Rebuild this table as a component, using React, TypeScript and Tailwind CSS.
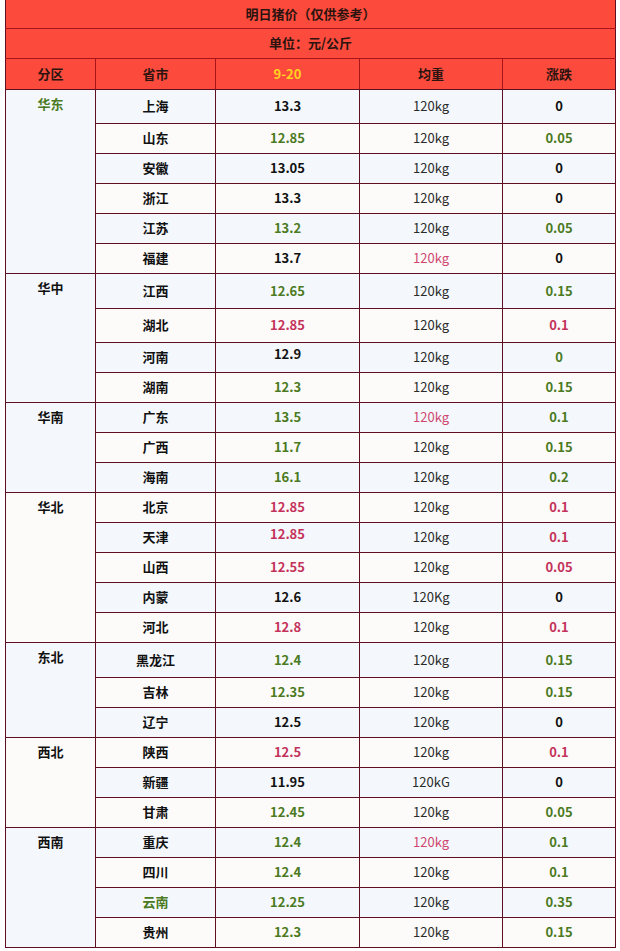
import React from "react";

type Tone = "k" | "g" | "r";

type Row = {
  name: string;
  price: string;
  pt: Tone;
  weight?: string;
  wt?: Tone;
  diff: string;
  dt: Tone;
  h?: number;
  nt?: Tone;
  up?: boolean;
};

type Group = { region: string; rt?: Tone; rows: Row[] };

const GROUPS: Group[] = [
  {
    region: "华东",
    rt: "g",
    rows: [
      { name: "上海", price: "13.3", pt: "k", diff: "0", dt: "k", h: 34 },
      { name: "山东", price: "12.85", pt: "g", diff: "0.05", dt: "g" },
      { name: "安徽", price: "13.05", pt: "k", diff: "0", dt: "k" },
      { name: "浙江", price: "13.3", pt: "k", diff: "0", dt: "k" },
      { name: "江苏", price: "13.2", pt: "g", diff: "0.05", dt: "g" },
      { name: "福建", price: "13.7", pt: "k", wt: "r", diff: "0", dt: "k" },
    ],
  },
  {
    region: "华中",
    rows: [
      { name: "江西", price: "12.65", pt: "g", diff: "0.15", dt: "g", h: 35 },
      { name: "湖北", price: "12.85", pt: "r", diff: "0.1", dt: "r", h: 34 },
      { name: "河南", price: "12.9", pt: "k", diff: "0", dt: "g", up: true },
      { name: "湖南", price: "12.3", pt: "g", diff: "0.15", dt: "g" },
    ],
  },
  {
    region: "华南",
    rows: [
      { name: "广东", price: "13.5", pt: "g", wt: "r", diff: "0.1", dt: "g" },
      { name: "广西", price: "11.7", pt: "g", diff: "0.15", dt: "g" },
      { name: "海南", price: "16.1", pt: "g", diff: "0.2", dt: "g" },
    ],
  },
  {
    region: "华北",
    rows: [
      { name: "北京", price: "12.85", pt: "r", diff: "0.1", dt: "r" },
      { name: "天津", price: "12.85", pt: "r", diff: "0.1", dt: "r", up: true },
      { name: "山西", price: "12.55", pt: "r", diff: "0.05", dt: "r" },
      { name: "内蒙", price: "12.6", pt: "k", weight: "120Kg", diff: "0", dt: "k" },
      { name: "河北", price: "12.8", pt: "r", diff: "0.1", dt: "r" },
    ],
  },
  {
    region: "东北",
    rows: [
      { name: "黑龙江", price: "12.4", pt: "g", diff: "0.15", dt: "g", h: 35 },
      { name: "吉林", price: "12.35", pt: "g", diff: "0.15", dt: "g" },
      { name: "辽宁", price: "12.5", pt: "k", diff: "0", dt: "k" },
    ],
  },
  {
    region: "西北",
    rows: [
      { name: "陕西", price: "12.5", pt: "r", diff: "0.1", dt: "r" },
      { name: "新疆", price: "11.95", pt: "k", weight: "120kG", diff: "0", dt: "k" },
      { name: "甘肃", price: "12.45", pt: "g", diff: "0.05", dt: "g" },
    ],
  },
  {
    region: "西南",
    rows: [
      { name: "重庆", price: "12.4", pt: "g", wt: "r", diff: "0.1", dt: "g" },
      { name: "四川", price: "12.4", pt: "g", diff: "0.1", dt: "g" },
      { name: "云南", price: "12.25", pt: "g", diff: "0.35", dt: "g", nt: "g" },
      { name: "贵州", price: "12.3", pt: "g", diff: "0.15", dt: "g" },
    ],
  },
];

const boldTone: Record<Tone, string> = {
  k: "text-[#111111]",
  g: "text-[#4b7a22]",
  r: "text-[#c4325a]",
};

const weightTone: Record<Tone, string> = {
  k: "text-[#2a2a2a]",
  g: "text-[#4b7a22]",
  r: "text-[#cf4670]",
};

const cell = "border border-[#5e1022] text-center align-middle p-0";

export default function App() {
  let idx = 0;
  return (
    <div
      className="w-[620px] h-[951px] bg-white pl-[5px]"
      style={{ fontFamily: '"Noto Sans CJK SC", "Noto Sans", sans-serif' }}
    >
      <table className="border-collapse table-fixed w-[610px] text-[13px] leading-[18px]">
        <colgroup>
          <col className="w-[90px]" />
          <col className="w-[120px]" />
          <col className="w-[144px]" />
          <col className="w-[143px]" />
          <col className="w-[113px]" />
        </colgroup>
        <thead>
          {/* 标题 */}
          <tr className="h-[28px] bg-[#fc4b3c]">
            <th
              colSpan={5}
              className="border-x border-b border-[#a8141a] border-l-[#5e1022] border-r-[#5e1022] font-bold text-[#2b1410]"
            >
              明日猪价（仅供参考）
            </th>
          </tr>
          <tr className="h-[30px] bg-[#fc4b3c]">
            <th
              colSpan={5}
              className="border-x border-b border-[#a8141a] border-l-[#5e1022] border-r-[#5e1022] font-bold text-[#2b1410]"
            >
              单位：元/公斤
            </th>
          </tr>
          <tr className="h-[31px] bg-[#fc4b3c] font-bold text-[#2b1410]">
            <th className="border border-[#a8141a] border-l-[#5e1022] border-b-[#5e1022]">分区</th>
            <th className="border border-[#a8141a] border-b-[#5e1022]">省市</th>
            <th className="border border-[#a8141a] border-b-[#5e1022] text-[#ffd21f]">9-20</th>
            <th className="border border-[#a8141a] border-b-[#5e1022]">均重</th>
            <th className="border border-[#a8141a] border-r-[#5e1022] border-b-[#5e1022]">涨跌</th>
          </tr>
        </thead>
        <tbody>
          {GROUPS.map((g) =>
            g.rows.map((r, i) => {
              const blue = idx++ % 2 === 0;
              const bg = blue ? "bg-[#f4f8fc]" : "bg-[#fdfbfa]";
              return (
                <tr key={g.region + r.name} className={bg} style={{ height: r.h ?? 30 }}>
                  {i === 0 && (
                    <td
                      rowSpan={g.rows.length}
                      className={`${cell} align-top pt-[5px] font-bold ${boldTone[g.rt ?? "k"]}`}
                    >
                      {g.region}
                    </td>
                  )}
                  <td className={`${cell} font-bold ${r.nt ? boldTone[r.nt] : "text-[#111111]"}`}>
                    {r.name}
                  </td>
                  <td className={`${cell} font-bold ${boldTone[r.pt]} ${r.up ? "pb-[6px]" : ""}`}>
                    {r.price}
                  </td>
                  <td className={`${cell} ${weightTone[r.wt ?? "k"]}`}>{r.weight ?? "120kg"}</td>
                  <td className={`${cell} font-bold ${boldTone[r.dt]}`}>{r.diff}</td>
                </tr>
              );
            })
          )}
        </tbody>
      </table>
    </div>
  );
}
